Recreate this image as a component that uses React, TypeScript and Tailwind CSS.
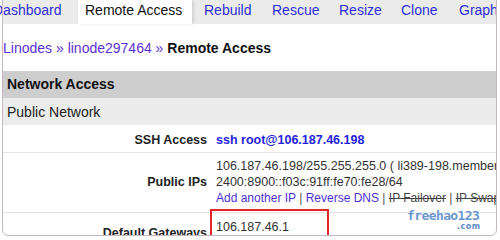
import React from "react";

const font = { fontFamily: '"Liberation Sans", Arial, sans-serif' };

function Tab({ label, w, pl, active, first }: { label: string; w?: string; pl: string; active?: boolean; first?: boolean }) {
  return (
    <div
      className={`${w ?? "flex-1"} shrink-0 ${pl} pt-[2px] leading-[16px] whitespace-nowrap ${
        active ? "bg-white text-[#111] shadow-[2px_0_3px_rgba(0,0,0,0.10)] relative z-10" : "text-[#2f2fd6]"
      }`}
    >
      <span className={first ? "ml-[-10px]" : ""}>{label}</span>
    </div>
  );
}

export default function App() {
  return (
    <div className="relative w-[500px] h-[240px] bg-white overflow-hidden" style={font}>
      <div className="relative w-[496px] h-[235px] overflow-hidden">
        <div className="ml-[3px] w-[493px]">
          {/* Tabs */}
          <div className="flex h-[24px] bg-[#ebebeb] text-[14px] overflow-visible">
            <Tab label="Dashboard" w="w-[75px]" pl="pl-0" first />
            <Tab label="Remote Access" w="w-[114px]" pl="pl-[7px]" active />
            <Tab label="Rebuild" w="w-[71px]" pl="pl-[12px]" />
            <Tab label="Rescue" w="w-[67px]" pl="pl-[9px]" />
            <Tab label="Resize" w="w-[62px]" pl="pl-[9px]" />
            <Tab label="Clone" w="w-[58px]" pl="pl-[9px]" />
            <Tab label="Graphs" w="w-[70px]" pl="pl-[9px]" />
          </div>

          {/* Breadcrumb */}
          <div className="h-[47px] pt-[16px] leading-[16px] text-[14px] whitespace-nowrap">
            <span className="text-[#5a33d2]">Linodes</span>
            <span className="text-[#5a33d2]"> » </span>
            <span className="text-[#5a33d2]">linode297464</span>
            <span className="text-[#5a33d2]"> » </span>
            <span className="font-bold text-[#111]">Remote Access</span>
          </div>

          {/* Section header */}
          <div className="h-[27px] bg-[#cecece] pl-[4px] pt-[5px] leading-[16px] text-[14px] font-bold text-[#111]">
            Network Access
          </div>
          <div className="h-[27px] bg-[#ececec] pl-[4px] pt-[6px] leading-[16px] text-[14px] text-[#222]">
            Public Network
          </div>

          {/* Rows */}
          <div className="grid grid-cols-[204px_1fr] h-[28px] border-b border-[#e4e4e4] text-[12.5px] leading-[16px]">
            <div className="text-right font-bold text-[#222] pt-[7px]">SSH Access</div>
            <div className="pl-[9px] pt-[7px] font-bold text-[#2323dc] whitespace-nowrap">ssh root@106.187.46.198</div>
          </div>

          <div className="grid grid-cols-[204px_1fr] border-b border-[#e4e4e4] leading-[16px] pt-[5px] pb-[6px]">
            <div className="text-right font-bold text-[#222] text-[12.5px] self-center">Public IPs</div>
            <div className="pl-[9px] text-[#333] whitespace-nowrap overflow-hidden">
              <div className="text-[12.5px]">106.187.46.198/255.255.255.0 ( li389-198.members.linode.com )</div>
              <div className="text-[12.5px]">2400:8900::f03c:91ff:fe70:fe28/64</div>
              <div className="text-[12px]">
                <span className="text-[#4f30d2]">Add another IP</span>
                <span className="text-[#555]"> | </span>
                <span className="text-[#4f30d2]">Reverse DNS</span>
                <span className="text-[#555]"> | </span>
                <span className="text-[#444] line-through">IP Failover</span>
                <span className="text-[#555]"> | </span>
                <span className="text-[#444] line-through">IP Swap</span>
              </div>
            </div>
          </div>

          <div className="grid grid-cols-[204px_1fr] leading-[16px]">
            <div className="text-right font-bold text-[#222] text-[12.5px] pt-[12px]">Default Gateways</div>
            <div className="pl-[9px] pt-[6px] text-[12.5px] text-[#333] whitespace-nowrap">
              <div>106.187.46.1</div>
              <div>fe80::1</div>
            </div>
          </div>
        </div>

        {/* Red annotation box */}
        <div className="absolute left-[210px] top-[209px] w-[119px] h-[40px] border-2 border-[#e3262b]" />

        {/* Watermark */}
        <div className="absolute left-[407px] top-[209px] leading-none select-none">
          <div
            className="text-[13px] font-bold tracking-[-0.6px] text-[#6b98cf]"
            style={{ fontFamily: '"DejaVu Sans Mono", monospace', textShadow: "0 0 2px #fff, 1px 1px 0 #fff" }}
          >
            freehao123
          </div>
          <div
            className="ml-[50px] mt-[1px] text-[8px] font-bold tracking-[0.5px] text-[#5b8bc6]"
            style={{ fontFamily: '"DejaVu Sans", sans-serif' }}
          >
            .com
          </div>
        </div>
      </div>

      {/* Screenshot frame */}
      <div className="absolute left-[2px] top-[-10px] w-[495px] h-[246px] border border-[#c7b8c2] rounded-b-[6px] pointer-events-none" />
    </div>
  );
}
